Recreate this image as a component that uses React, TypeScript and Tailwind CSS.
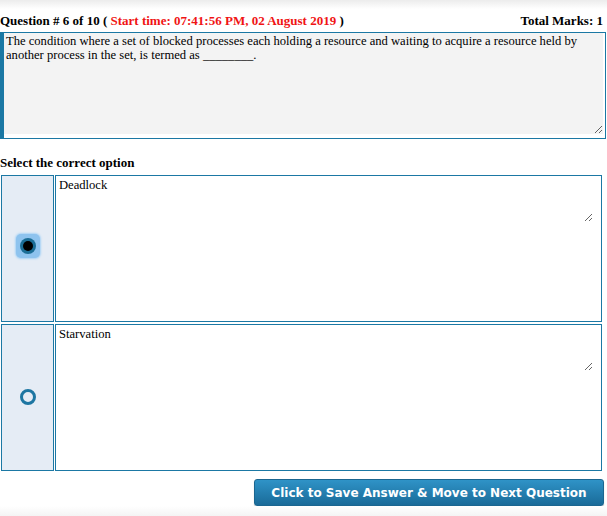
import React from 'react';

const serif = "font-['Liberation_Serif','Times_New_Roman',serif]";

const options = [
  { id: 'a', label: 'Deadlock', selected: true },
  { id: 'b', label: 'Starvation', selected: false },
];

function Radio({ selected }: { selected: boolean }) {
  if (selected) {
    return (
      <div className="mb-[5px] w-[24px] h-[24px] rounded-[5px] bg-[#8ec3ee] flex items-center justify-center shadow-[0_0_2px_1px_#a9d3f5]">
        <div className="w-[16px] h-[16px] rounded-full bg-[#1b6e97] flex items-center justify-center">
          <div className="w-[10px] h-[10px] rounded-full bg-black" />
        </div>
      </div>
    );
  }
  return <div className="mb-[2px] w-[16px] h-[16px] rounded-full border-[3px] border-[#1d76a2]" />;
}

export default function App() {
  return (
    <div className={`w-[607px] h-[516px] bg-white flex flex-col text-black ${serif}`}>
      <div className="h-[9px] bg-gradient-to-b from-[#ececec] to-white" />

      <div className="h-[23px] flex items-center justify-between pr-[4px] text-[13px] font-bold">
        <div>
          Question # 6 of 10 ({' '}
          <span className="text-[#f01414]">Start time: 07:41:56 PM, 02 August 2019</span> )
        </div>
        <div>Total Marks: 1</div>
      </div>

      <div className="w-[606px] h-[107px] border border-[#1b78a4] border-l-[4px] bg-white">
        <textarea
          readOnly
          className="block w-[599px] h-[101px] bg-[#f3f3f3] px-[2px] pt-[1px] text-[12.6px] leading-[14px] outline-none"
          defaultValue="The condition where a set of blocked processes each holding a resource and waiting to acquire a resource held by another process in the set, is termed as ________."
        />
      </div>

      <div className="mt-[14px] h-[20px] text-[13px] font-bold leading-[20px]">Select the correct option</div>

      <div className="mt-[2px] flex flex-col gap-[2px] pl-[1px]">
        {options.map((o) => (
          <div key={o.id} className="flex gap-[1px] h-[147px]">
            <div className="w-[53px] border border-[#1b78a4] bg-[#e5ecf5] flex items-center justify-center">
              <Radio selected={o.selected} />
            </div>
            <div className="w-[547px] border border-[#1b78a4] bg-white p-[1px]">
              <textarea
                readOnly
                className="block w-[536px] h-[45px] bg-white px-[2px] pt-[1px] text-[12.6px] leading-[14px] outline-none"
                defaultValue={o.label}
              />
            </div>
          </div>
        ))}
      </div>

      <div className="flex justify-end pr-[3px] mt-[8px] shrink-0">
        <button className="w-[350px] h-[27px] shrink-0 rounded-[3px] border border-[#1b6690] bg-gradient-to-b from-[#2f93c7] to-[#1a6b99] text-white text-[12px] font-bold font-['DejaVu_Sans','Verdana',sans-serif] shadow-[0_1px_1px_rgba(0,0,0,0.25)]">
          Click to Save Answer &amp; Move to Next Question
        </button>
      </div>

      <div className="flex-1 bg-gradient-to-b from-white to-[#f4f4f4]" />
    </div>
  );
}
